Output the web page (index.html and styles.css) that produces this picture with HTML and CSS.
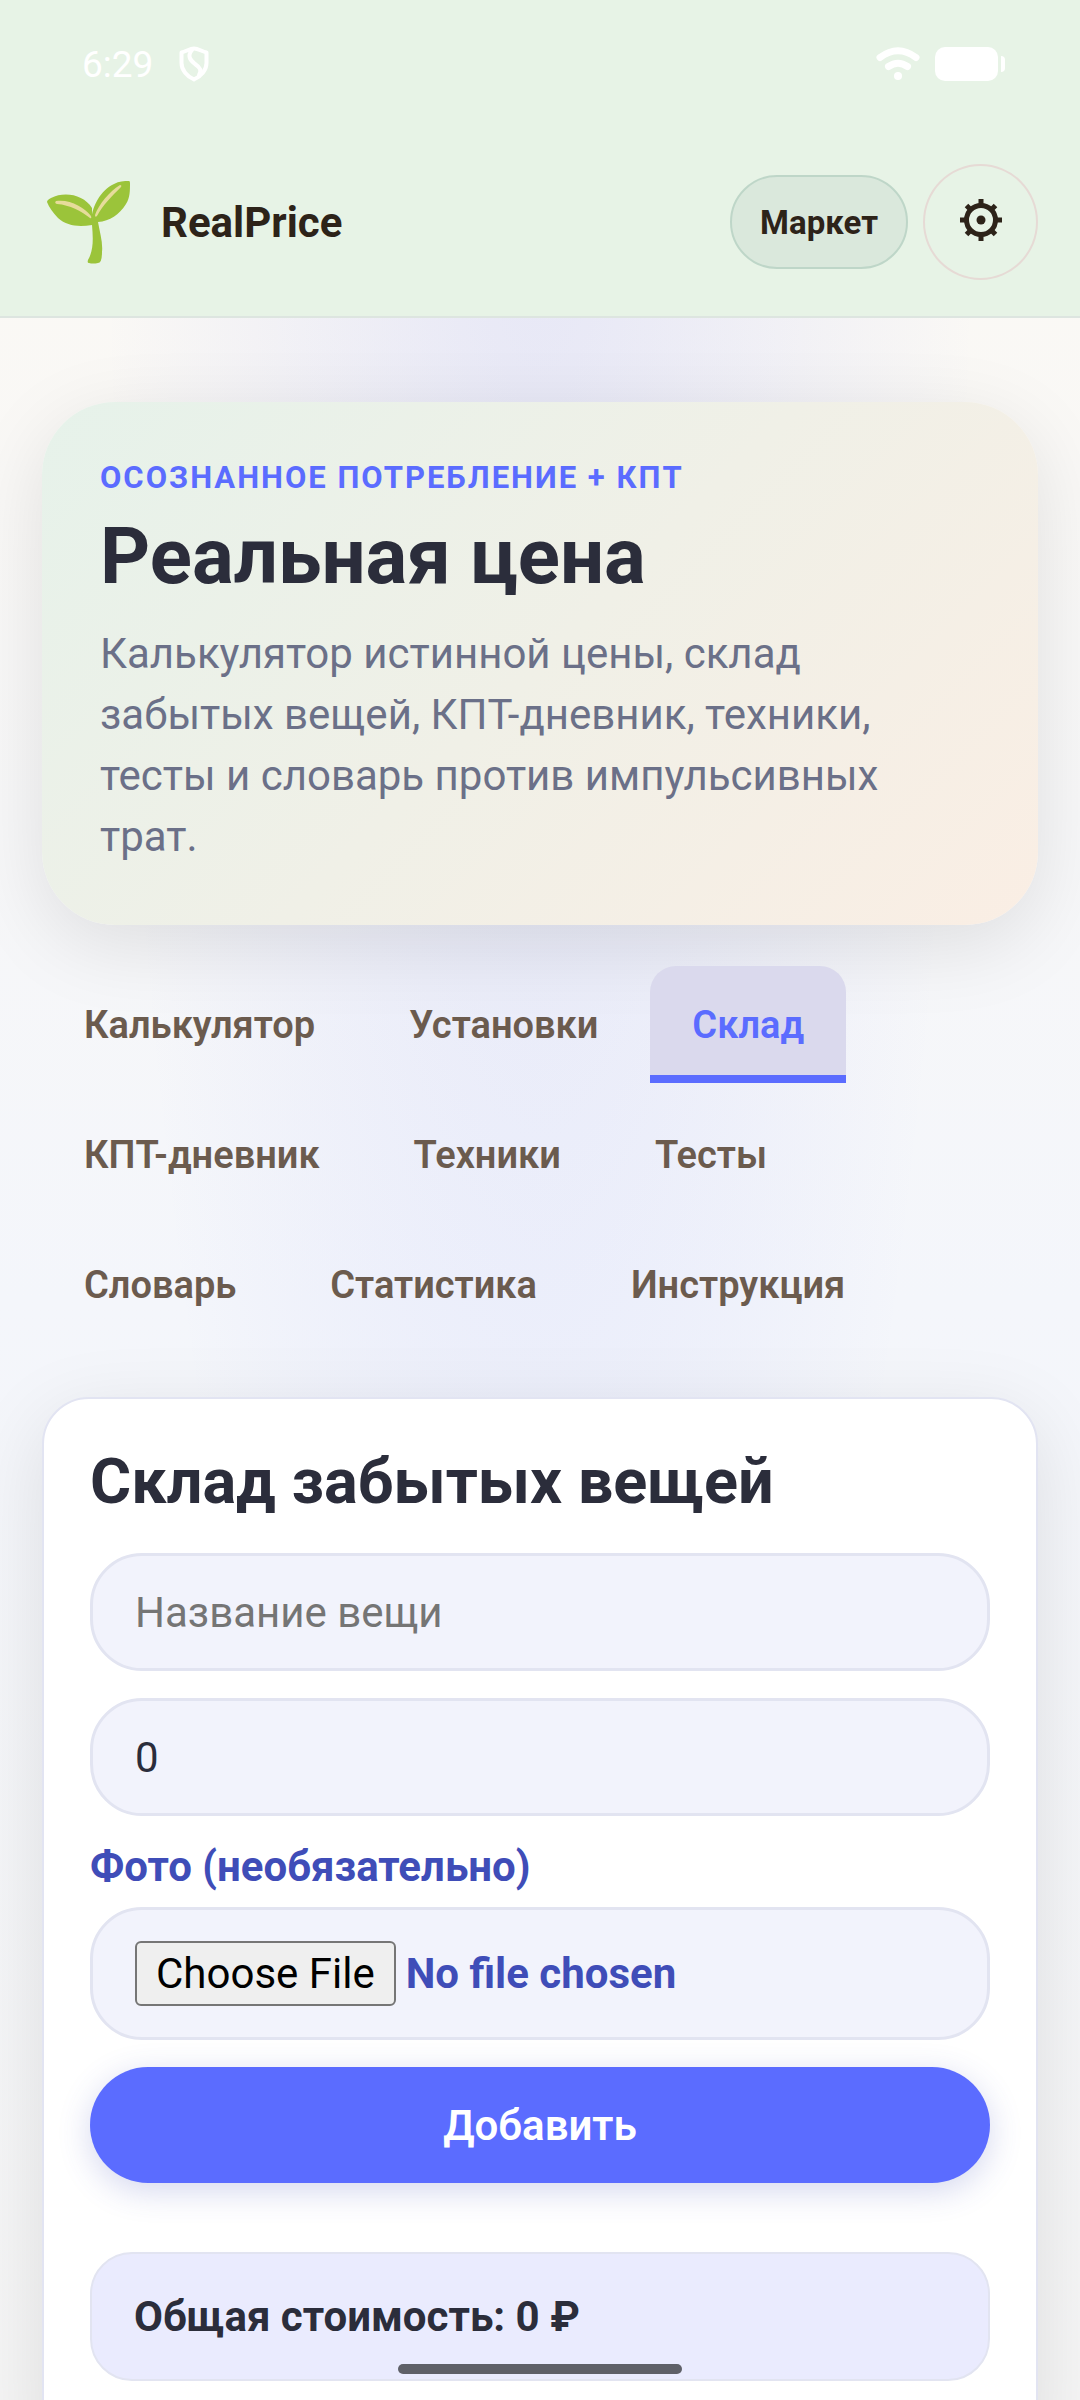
FILE: index.html
```html
<!DOCTYPE html>
<html lang="ru">

<head>
    <meta charset="UTF-8">
    <meta name="viewport" content="width=device-width, initial-scale=1.0">
    <title>RealPrice</title>
    <link rel="stylesheet" href="styles.css">
</head>

<body>
    <header class="header">
        <div class="status-bar">
            <div class="status-left">
                <span>6:29</span>
                <svg class="icon-shield" viewBox="0 0 30 36" fill="none" stroke="#fff" stroke-width="4" stroke-linejoin="round" stroke-linecap="round">
                    <path d="M15 2.500 C19 2.500 23 5.500 27.500 6.500 V17 C27.500 24 22 30.500 15 33.500 C8 30.500 2.500 24 2.500 17 V6.500 C7 5.500 11 2.500 15 2.500Z" />
                    <path d="M13 4 C8 10 11 14 16 18 C21 21.500 23 24 20 29" />
                </svg>
            </div>
            <div class="status-right">
                <svg class="icon-wifi" viewBox="0 0 44 34" fill="none" stroke="#fff" stroke-width="7" stroke-linecap="round">
                    <path d="M4 10.500 Q22 -3 40 10.500" />
                    <path d="M12.500 19.500 Q22 13 31.500 19.500" />
                    <circle cx="22" cy="29" r="4" fill="#fff" stroke="none" />
                </svg>
                <svg class="icon-battery" viewBox="0 0 70 34" fill="#fff">
                    <rect width="63" height="34" rx="10" />
                    <path d="M66 9 Q70 9 70 13 V21 Q70 25 66 25Z" />
                </svg>
            </div>
        </div>
        <div class="topbar">
            <div class="brand">
                <svg class="brand-logo" viewBox="0 0 90 90">
                    <path fill="#9bc43a" d="M50 45 C48 34 57 14 72 7 C77 4 82 4 87 4 Q88 4 88 6 C88 14 88 21 84 27 C77 38 68 44 56 45 C58 56 61 66 60 75 Q60 86 56 86 Q51 87 47 86 Q45 86 46 83 C52 73 51 60 50 48 C36 50 25 49 16 41 C11 36 7 30 5 25 Q5 23 9 21 C23 14 42 18 50 31Z" />
                    <path fill="#e6dc9b" d="M14 24 C28 22 42 30 49 39 Q50 42 48 41 C39 34 28 28 15 27 Q12 26 14 24Z" />
                    <path fill="#e6dc9b" d="M53 38 C57 27 67 15 78 8 Q80 8 79 10 C70 19 61 28 55 39 Q53 41 53 38Z" />
                </svg>
                <span>RealPrice</span>
            </div>
            <div class="header-actions">
                <button class="market-btn" type="button">Маркет</button>
                <button class="settings-btn" type="button" aria-label="Настройки">
                    <svg class="icon-gear" viewBox="0 0 42 42" fill="none" stroke="#2d2319">
                        <circle cx="21" cy="21" r="14.500" stroke-width="5" />
                        <circle cx="21" cy="21" r="4.500" fill="#2d2319" stroke="none" />
                        <path stroke-width="5" d="M21 0v7M21 35v7M0 21h7M35 21h7M6.500 6.500l5 5M30.500 30.500l5 5M35.500 6.500l-5 5M11.500 30.500l-5 5" />
                    </svg>
                </button>
            </div>
        </div>
    </header>

    <main class="container">
        <section class="hero">
            <p class="eyebrow">Осознанное потребление + КПТ</p>
            <h1>Реальная цена</h1>
            <p class="hero-text">Калькулятор истинной цены, склад забытых вещей, КПТ-дневник, техники, тесты и словарь против импульсивных трат.</p>
        </section>

        <nav class="tabs">
            <button class="tab" type="button">Калькулятор</button>
            <button class="tab" type="button">Установки</button>
            <button class="tab active" type="button">Склад</button>
            <button class="tab" type="button">КПТ-дневник</button>
            <button class="tab" type="button">Техники</button>
            <button class="tab" type="button">Тесты</button>
            <button class="tab" type="button">Словарь</button>
            <button class="tab" type="button">Статистика</button>
            <button class="tab" type="button">Инструкция</button>
        </nav>

        <section class="card">
            <h2>Склад забытых вещей</h2>
            <form class="item-form">
                <input class="field" type="text" placeholder="Название вещи" aria-label="Название вещи">
                <input class="field" type="number" value="0" aria-label="Цена">
                <div class="file-group">
                    <label for="photo">Фото (необязательно)</label>
                    <input class="field file-field" type="file" id="photo" accept="image/*">
                </div>
                <button class="add-btn" type="button">Добавить</button>
            </form>
            <div class="total">Общая стоимость: 0 ₽</div>
        </section>
    </main>

    <div class="home-bar"></div>
</body>

</html>
```

FILE: styles.css
```css
* {
    box-sizing: border-box;
}

body {
    margin: 0;
    min-height: 100vh;
    font-family: Roboto, "Noto Sans", sans-serif;
    font-size: 42px;
    color: #2b2d3b;
    background:
        radial-gradient(ellipse 440px 2300px at 50% 0, rgba(91, 108, 255, 0.13), transparent),
        linear-gradient(180deg, #fcf9f3 0, #f4f6fb 1300px, #f5f5f5 2400px);
}

button,
input {
    font-family: inherit;
    font-size: inherit;
}

button {
    cursor: pointer;
}

h1,
h2,
p {
    margin: 0;
}

/* Header */
.header {
    background: #e7f3e6;
    border-bottom: 2px solid #dde5e0;
    color: #2d2319;
}

.status-bar {
    display: flex;
    align-items: center;
    justify-content: space-between;
    height: 128px;
    padding: 0 75px 0 82px;
    color: #fff;
    font-size: 37px;
}

.status-left {
    display: flex;
    align-items: center;
    gap: 26px;
}

.status-right {
    display: flex;
    align-items: center;
    gap: 15px;
}

.icon-shield {
    width: 30px;
    height: 36px;
}

.icon-wifi {
    width: 44px;
    height: 34px;
}

.icon-battery {
    width: 70px;
    height: 34px;
}

.topbar {
    display: flex;
    align-items: center;
    justify-content: space-between;
    padding: 36px 42px;
}

.brand {
    display: flex;
    align-items: center;
    gap: 29px;
    font-weight: 700;
}

.brand-logo {
    width: 90px;
    height: 90px;
}

.header-actions {
    display: flex;
    align-items: center;
    gap: 15px;
}

.market-btn {
    height: 94px;
    padding: 0 28px;
    border: 2px solid #bed6c8;
    border-radius: 47px;
    background: #dae8dc;
    color: #2d2319;
    font-size: 33px;
    font-weight: 700;
}

.settings-btn {
    display: flex;
    align-items: center;
    justify-content: center;
    width: 115px;
    height: 116px;
    padding: 0 0 4px;
    border: 2px solid #e6dad5;
    border-radius: 50%;
    background: none;
}

.icon-gear {
    width: 42px;
    height: 42px;
}

.container {
    padding: 84px 42px 0;
}

/* Hero */
.hero {
    padding: 58px;
    border-radius: 73px;
    background: linear-gradient(135deg, #e6f2ea, #faeee4);
    box-shadow: 0 20px 80px rgba(0, 0, 0, 0.1);
}

.eyebrow {
    color: #5b6cff;
    font-size: 31px;
    line-height: 36px;
    font-weight: 700;
    letter-spacing: 2px;
    text-transform: uppercase;
}

h1 {
    margin: 13px 0 18px;
    font-size: 78px;
    line-height: 96px;
    font-weight: 700;
}

.hero-text {
    color: #6b7088;
    line-height: 61px;
}

/* Tabs */
.tabs {
    display: flex;
    flex-wrap: wrap;
    gap: 13px 10px;
    margin: 41px 0 54px;
}

.tab {
    height: 117px;
    padding: 0 42px;
    border: 0;
    border-radius: 26px 26px 0 0;
    background: none;
    color: #6b5b4e;
    font-size: 38px;
    font-weight: 600;
}

.tab.active {
    background: #dad9ed;
    box-shadow: inset 0 -8px #5b6cff;
    color: #5b6cff;
}

/* Card */
.card {
    padding: 46px 46px 84px;
    border: 2px solid #e2e4f2;
    border-radius: 47px;
    background: #fff;
    box-shadow: 0 20px 80px rgba(0, 0, 0, 0.1);
}

h2 {
    margin-bottom: 34px;
    font-size: 63px;
    line-height: 74px;
    font-weight: 700;
}

.item-form {
    display: flex;
    flex-direction: column;
    gap: 27px;
}

.field {
    width: 100%;
    height: 118px;
    padding: 0 42px;
    border: 3px solid #e2e4f1;
    border-radius: 52px;
    background: #f2f3fc;
    color: #2b2d3b;
}

.field::placeholder {
    color: #757575;
}

.field[type="number"] {
    appearance: textfield;
    -moz-appearance: textfield;
}

.file-group {
    display: flex;
    flex-direction: column;
    gap: 16px;
    color: #3f4db8;
    font-weight: 700;
}

.file-group label {
    line-height: 48px;
}

.file-field {
    height: 133px;
    padding: 31px 42px;
    color: inherit;
    font-weight: inherit;
}

.file-field::file-selector-button {
    margin: 0 10px 0 0;
    padding: 6px 19px;
    border: 2px solid #767676;
    border-radius: 6px;
    background: #efefef;
    color: #000;
    font-family: inherit;
    font-size: 42px;
    font-weight: 400;
}

.add-btn {
    height: 116px;
    border: 0;
    border-radius: 58px;
    background: #5b6cff;
    box-shadow: 0 8px 32px rgba(63, 77, 184, 0.22);
    color: #fff;
    font-weight: 600;
}

.total {
    margin-top: 69px;
    padding: 38px 42px;
    border: 2px solid #e2e4f1;
    border-radius: 42px;
    background: #eaebfe;
    line-height: 49px;
    font-weight: 700;
}

.home-bar {
    position: fixed;
    bottom: 26px;
    left: 50%;
    width: 284px;
    height: 10px;
    margin-left: -142px;
    border-radius: 5px;
    background: #5f6068;
}
```
